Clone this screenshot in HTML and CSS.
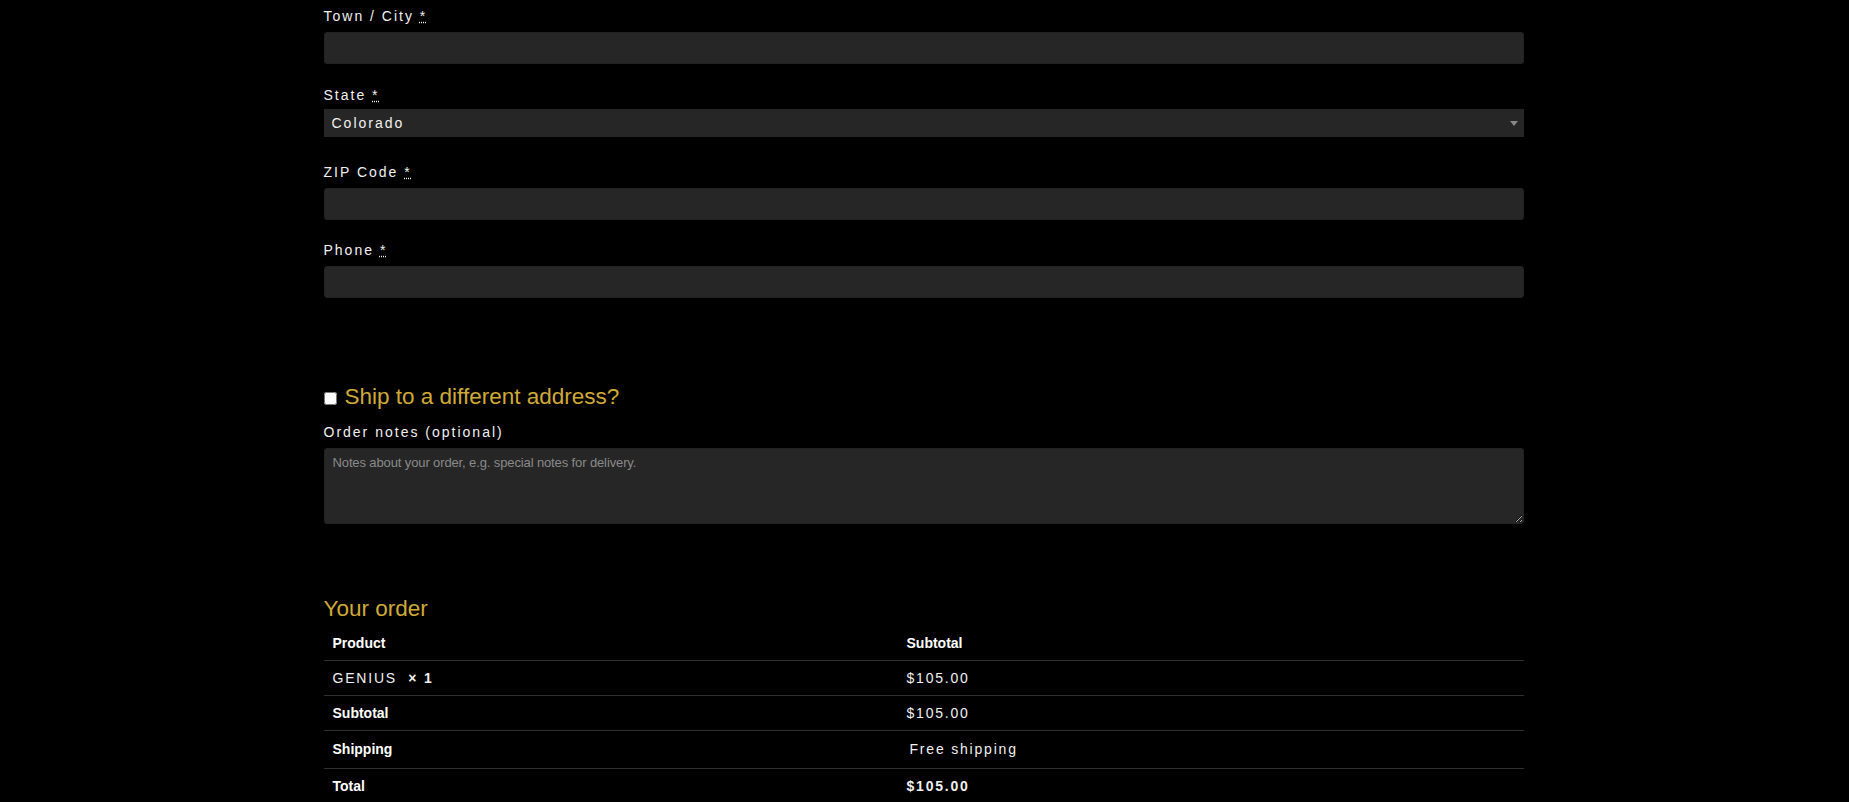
FILE: index.html
```html
<!DOCTYPE html>
<html lang="en">

<head>
  <meta charset="UTF-8" />
  <meta name="viewport" content="width=device-width, initial-scale=1.0" />
  <title>Checkout</title>
  <link rel="stylesheet" href="styles.css">
</head>

<body>
  <form class="checkout">
    <div class="billing">
      <p class="form-row">
        <label for="city">Town / City <abbr class="required" title="required">*</abbr></label>
        <input type="text" class="input-text" id="city" />
      </p>
      <p class="form-row row-select">
        <label for="state">State <abbr class="required" title="required">*</abbr></label>
        <span class="select-wrap">
          <select id="state">
            <option>Colorado</option>
          </select>
        </span>
      </p>
      <p class="form-row row-zip">
        <label for="zip">ZIP Code <abbr class="required" title="required">*</abbr></label>
        <input type="text" class="input-text" id="zip" />
      </p>
      <p class="form-row last">
        <label for="phone">Phone <abbr class="required" title="required">*</abbr></label>
        <input type="tel" class="input-text" id="phone" />
      </p>
    </div>

    <h3 class="ship-heading">
      <label><input type="checkbox" class="ship-check" /><span>Ship to a different address?</span></label>
    </h3>

    <p class="form-row notes">
      <label for="notes">Order notes <span class="optional">(optional)</span></label>
      <textarea id="notes" placeholder="Notes about your order, e.g. special notes for delivery."></textarea>
    </p>

    <h3 class="order-heading">Your order</h3>

    <table class="order-table">
      <thead>
        <tr>
          <th class="product-name">Product</th>
          <th class="product-total">Subtotal</th>
        </tr>
      </thead>
      <tbody>
        <tr>
          <td class="product-name">GENIUS&nbsp; <strong class="qty">×&nbsp;1</strong></td>
          <td>$105.00</td>
        </tr>
      </tbody>
      <tfoot>
        <tr>
          <th>Subtotal</th>
          <td>$105.00</td>
        </tr>
        <tr class="shipping">
          <th>Shipping</th>
          <td>Free shipping</td>
        </tr>
        <tr>
          <th>Total</th>
          <td><strong>$105.00</strong></td>
        </tr>
      </tfoot>
    </table>
  </form>
</body>

</html>
```

FILE: styles.css
```css
body {
  margin: 0;
  background: #000;
  color: #f0f0f0;
  font-family: "Liberation Sans", Arial, sans-serif;
}

.checkout {
  width: 1200px;
  margin: 0 auto;
  position: relative;
  left: -1px;
}

.billing {
  padding-top: 6px;
}

.form-row {
  margin: 0 0 21px;
}

.form-row.row-select {
  margin-bottom: 25px;
}

.form-row.row-zip {
  margin-bottom: 20px;
}

.form-row.last {
  margin-bottom: 0;
}

.form-row label {
  display: block;
  font-size: 14px;
  line-height: 20px;
  letter-spacing: 2px;
  margin-bottom: 6px;
}

.row-select label {
  margin-bottom: 4px;
}

abbr.required {
  text-decoration: underline dotted;
  cursor: help;
}

.input-text,
textarea {
  display: block;
  width: 100%;
  box-sizing: border-box;
  background: #262626;
  border: 1px solid #222;
  border-radius: 3px;
  color: #eee;
  outline: none;
}

.input-text {
  height: 32px;
  padding: 0 9px;
  font-size: 14px;
}

.select-wrap {
  position: relative;
  display: block;
}

.select-wrap select {
  display: block;
  width: 100%;
  height: 28px;
  padding: 0 24px 0 8px;
  border: none;
  border-radius: 0;
  background: #262626;
  color: #f2f2f2;
  font-family: inherit;
  font-size: 14px;
  letter-spacing: 2px;
  appearance: none;
  -webkit-appearance: none;
  outline: none;
}

.select-wrap::after {
  content: "";
  position: absolute;
  top: 12px;
  right: 6px;
  border-style: solid;
  border-width: 5px 4px 0 4px;
  border-color: #888 transparent transparent transparent;
}

.ship-heading {
  margin: 85px 0 12px;
  font-size: 22.5px;
  line-height: 27px;
  font-weight: 400;
  color: #d0aa36;
}

.ship-check {
  width: 13px;
  height: 13px;
  margin: 0 8px 0 0;
  vertical-align: -1px;
}

.notes {
  margin-bottom: 71px;
}

textarea {
  height: 76px;
  padding: 4px 8px;
  font-family: inherit;
  font-size: 13px;
  line-height: 19px;
  resize: vertical;
}

textarea::placeholder {
  color: #8a8a8a;
  letter-spacing: -0.12px;
}

.order-heading {
  margin: 0 0 3px;
  font-size: 22.5px;
  line-height: 27px;
  font-weight: 400;
  color: #d0aa36;
}

.order-table {
  width: 100%;
  border-collapse: separate;
  border-spacing: 0;
  font-size: 14px;
  line-height: 20px;
}

.order-table th,
.order-table td {
  padding: 7px 9px;
  text-align: left;
  vertical-align: middle;
}

.order-table th {
  color: #fff;
  font-weight: 700;
}

.order-table td {
  color: #f0f0f0;
  letter-spacing: 1.8px;
}

.order-table thead th {
  padding: 8px 9px 7px;
}

.order-table th.product-name {
  width: 556px;
}

.order-table tbody td,
.order-table tfoot th,
.order-table tfoot td {
  border-top: 1px solid #303030;
}

.order-table .qty {
  font-weight: 700;
}

.order-table tr.shipping th,
.order-table tr.shipping td {
  padding-top: 8px;
  padding-bottom: 8px;
  line-height: 21px;
}

.order-table tr.shipping td {
  padding-left: 12px;
}
```
